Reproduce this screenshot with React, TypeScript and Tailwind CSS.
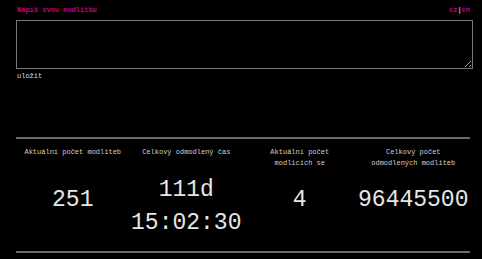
import React from 'react';

const stats = [
  { label: ['Aktuální počet modliteb'], value: ['251'], offset: 'mt-[26px]' },
  { label: ['Celkový odmodlený čas'], value: ['111d', '15:02:30'], offset: 'mt-[16px]' },
  { label: ['Aktuální počet', 'modlících se'], value: ['4'], offset: 'mt-[15px]' },
  { label: ['Celkový počet', 'odmodlených modliteb'], value: ['96445500'], offset: 'mt-[15px]' },
];

export default function App() {
  return (
    <div className="min-h-screen bg-black pl-4 pr-3 font-['Liberation_Mono',monospace]">
      {/* Header */}
      <div className="flex items-center justify-between pt-[5px] text-[7px] leading-[10px]">
        <span className="pl-px font-bold text-[#c4007a]">Napiš svou modlitbu</span>
        <span className="font-bold">
          <span className="text-[#c4007a]">cz</span>
          <span className="text-[#bbbbbb]">|</span>
          <span className="text-[#c4007a]">en</span>
        </span>
      </div>

      {/* Prayer input */}
      <textarea className="mt-[5px] block h-[49px] w-[457px] resize border-[1.5px] border-[#7a7a7a] bg-black text-white outline-none" />
      <button className="mt-[2px] block pl-px text-[7px] leading-[10px] text-[#dddddd]">uložit</button>

      <hr className="mt-[56px] border-t-2 border-[#6b6b6b]" />

      {/* Stats */}
      <div className="grid grid-cols-4 pt-[8px] text-center">
        {stats.map((s, i) => (
          <div key={i} className="flex flex-col items-center">
            <div className="text-[7px] leading-[11px] text-[#d0d0d0]">
              {s.label.map((l, j) => (
                <div key={j}>{l}</div>
              ))}
            </div>
            <div className={`${s.offset} text-[23px] leading-[33px] text-[#e6e6e6]`}>
              {s.value.map((v, j) => (
                <div key={j}>{v}</div>
              ))}
            </div>
          </div>
        ))}
      </div>

      <hr className="mt-[11px] border-t-2 border-[#6b6b6b]" />
    </div>
  );
}
